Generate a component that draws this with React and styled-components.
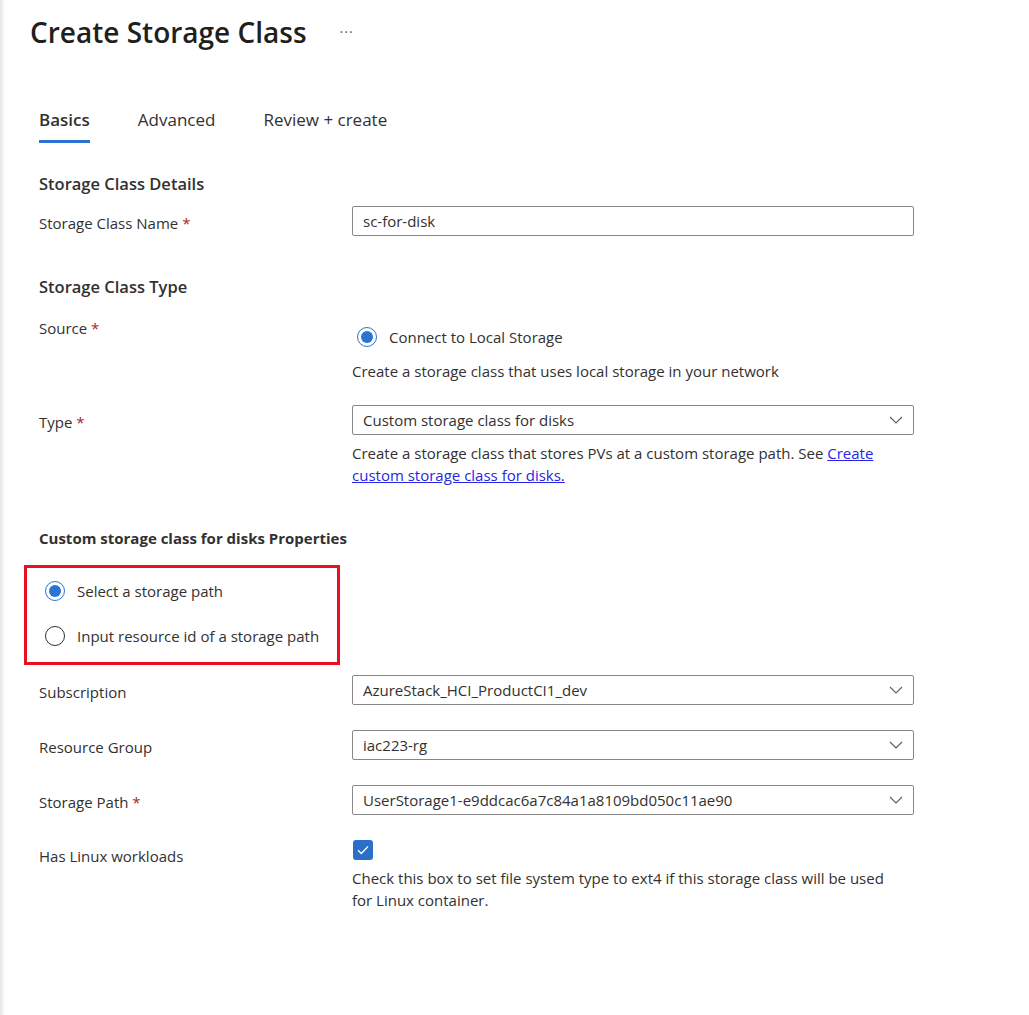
import React from "react";
import styled, { createGlobalStyle } from "styled-components";

const GlobalStyle = createGlobalStyle`
  html, body {
    margin: 0;
    padding: 0;
    background: #fff;
  }
  body {
    font-family: "Open Sans", "Noto Sans", sans-serif;
    color: #323130;
    font-size: 15px;
  }
`;

const Page = styled.div`
  min-height: 1015px;
  background: linear-gradient(to right, #e6e6e6 0, #f4f4f4 3px, #fff 5px);
`;

const Header = styled.div`
  display: flex;
  align-items: center;
  gap: 33px;
  padding: 14px 0 0 30px;
`;

const Title = styled.h1`
  margin: 0;
  font-size: 28px;
  line-height: 36px;
  font-weight: 600;
  color: #201f1e;
`;

const More = styled.span`
  font-size: 14px;
  letter-spacing: 1px;
  color: #605e5c;
  line-height: 36px;
`;

const Body = styled.div`
  padding-left: 39px;
`;

const Tabs = styled.div`
  display: flex;
  gap: 48px;
  margin-top: 60px;
`;

const Tab = styled.div`
  font-size: 17px;
  line-height: 20px;
  padding-bottom: 10px;
  border-bottom: 3px solid ${(p) => (p.$active ? "#2b74d3" : "transparent")};
  font-weight: ${(p) => (p.$active ? 600 : 400)};
  color: #323130;
`;

const SectionTitle = styled.h2`
  margin: ${(p) => p.$top}px 0 0;
  font-size: 16.5px;
  line-height: 22px;
  font-weight: 600;
  color: #323130;
`;

const SubTitle = styled.h3`
  margin: ${(p) => p.$top}px 0 0;
  font-size: 15px;
  line-height: 20px;
  font-weight: 700;
  color: #323130;
`;

const Row = styled.div`
  display: grid;
  grid-template-columns: 313px 562px;
  margin-top: ${(p) => p.$top}px;
`;

const Label = styled.div`
  font-size: 15px;
  line-height: ${(p) => p.$lh || 26}px;
  padding-top: ${(p) => p.$pt ?? 4}px;
  color: #323130;
`;

const Req = styled.span`
  color: #a4262c;
`;

const Field = styled.div`
  display: flex;
  flex-direction: column;
  padding-top: ${(p) => p.$pt || 0}px;
`;

const TextBox = styled.div`
  box-sizing: border-box;
  height: 30px;
  border: 1px solid #8a8886;
  border-radius: 2px;
  padding: 0 10px;
  display: flex;
  align-items: center;
  justify-content: space-between;
  font-size: 15px;
  color: #323130;
`;

const Help = styled.p`
  margin: ${(p) => p.$top}px 0 0;
  max-width: 548px;
  font-size: 15px;
  line-height: 22px;
  color: #323130;
`;

const Link = styled.a`
  color: #2626e6;
  text-decoration: underline;
`;

const RadioOption = styled.label`
  display: flex;
  align-items: center;
  gap: 12px;
  font-size: 15px;
  line-height: 20px;
  margin-top: ${(p) => p.$top || 0}px;
  margin-left: ${(p) => p.$indent || 0}px;
  color: #323130;
`;

const RadioCircle = styled.span`
  box-sizing: border-box;
  width: 20px;
  height: 20px;
  border-radius: 50%;
  border: 1px solid ${(p) => (p.$checked ? "#2b74d3" : "#323130")};
  display: flex;
  align-items: center;
  justify-content: center;
  flex-shrink: 0;
  &::after {
    content: "";
    width: 12px;
    height: 12px;
    border-radius: 50%;
    background: ${(p) => (p.$checked ? "#2b74d3" : "transparent")};
  }
`;

const Highlight = styled.div`
  box-sizing: border-box;
  width: 316px;
  height: 100px;
  margin: 17px 0 0 -15px;
  border: 3px solid #e81123;
  padding: 13px 0 0 18px;
`;

const Checkbox = styled.span`
  width: 20px;
  height: 20px;
  border-radius: 3px;
  background: #2b6fc8;
  display: flex;
  align-items: center;
  justify-content: center;
  margin-left: 1px;
`;

const Chevron = () => (
  <svg width="14" height="8" viewBox="0 0 14 8" fill="none">
    <path d="M1 1l6 6 6-6" stroke="#605e5c" strokeWidth="1.1" />
  </svg>
);

const Dropdown = ({ value }) => (
  <TextBox>
    <span>{value}</span>
    <Chevron />
  </TextBox>
);

export default function App() {
  return (
    <Page>
      <GlobalStyle />
      <Header>
        <Title>Create Storage Class</Title>
        <More>···</More>
      </Header>
      <Body>
        <Tabs>
          <Tab $active>Basics</Tab>
          <Tab>Advanced</Tab>
          <Tab>Review + create</Tab>
        </Tabs>

        <SectionTitle $top={30}>Storage Class Details</SectionTitle>
        <Row $top={11}>
          <Label>
            Storage Class Name <Req>*</Req>
          </Label>
          <TextBox>sc-for-disk</TextBox>
        </Row>

        <SectionTitle $top={40}>Storage Class Type</SectionTitle>
        <Row $top={20}>
          <Label $lh={20} $pt={0}>
            Source <Req>*</Req>
          </Label>
          <Field $pt={9}>
            <RadioOption $indent={5}>
              <RadioCircle $checked />
              Connect to Local Storage
            </RadioOption>
            <Help $top={13}>Create a storage class that uses local storage in your network</Help>
          </Field>
        </Row>
        <Row $top={23}>
          <Label>
            Type <Req>*</Req>
          </Label>
          <Field>
            <Dropdown value="Custom storage class for disks" />
            <Help $top={7}>
              Create a storage class that stores PVs at a custom storage path. See{" "}
              <Link href="#">Create custom storage class for disks.</Link>
            </Help>
          </Field>
        </Row>

        <SubTitle $top={42}>Custom storage class for disks Properties</SubTitle>
        <Highlight>
          <RadioOption>
            <RadioCircle $checked />
            Select a storage path
          </RadioOption>
          <RadioOption $top={25}>
            <RadioCircle />
            Input resource id of a storage path
          </RadioOption>
        </Highlight>

        <Row $top={10}>
          <Label>Subscription</Label>
          <Dropdown value="AzureStack_HCI_ProductCI1_dev" />
        </Row>
        <Row $top={25}>
          <Label>Resource Group</Label>
          <Dropdown value="iac223-rg" />
        </Row>
        <Row $top={25}>
          <Label>
            Storage Path <Req>*</Req>
          </Label>
          <Dropdown value="UserStorage1-e9ddcac6a7c84a1a8109bd050c11ae90" />
        </Row>
        <Row $top={24}>
          <Label $lh={20} $pt={7}>Has Linux workloads</Label>
          <Field $pt={1}>
            <Checkbox>
              <svg width="12" height="10" viewBox="0 0 12 10" fill="none">
                <path d="M1 5.2l3.3 3.3L11 1.5" stroke="#fff" strokeWidth="1.3" />
              </svg>
            </Checkbox>
            <Help $top={7}>
              Check this box to set file system type to ext4 if this storage class will be used for Linux container.
            </Help>
          </Field>
        </Row>
      </Body>
    </Page>
  );
}
